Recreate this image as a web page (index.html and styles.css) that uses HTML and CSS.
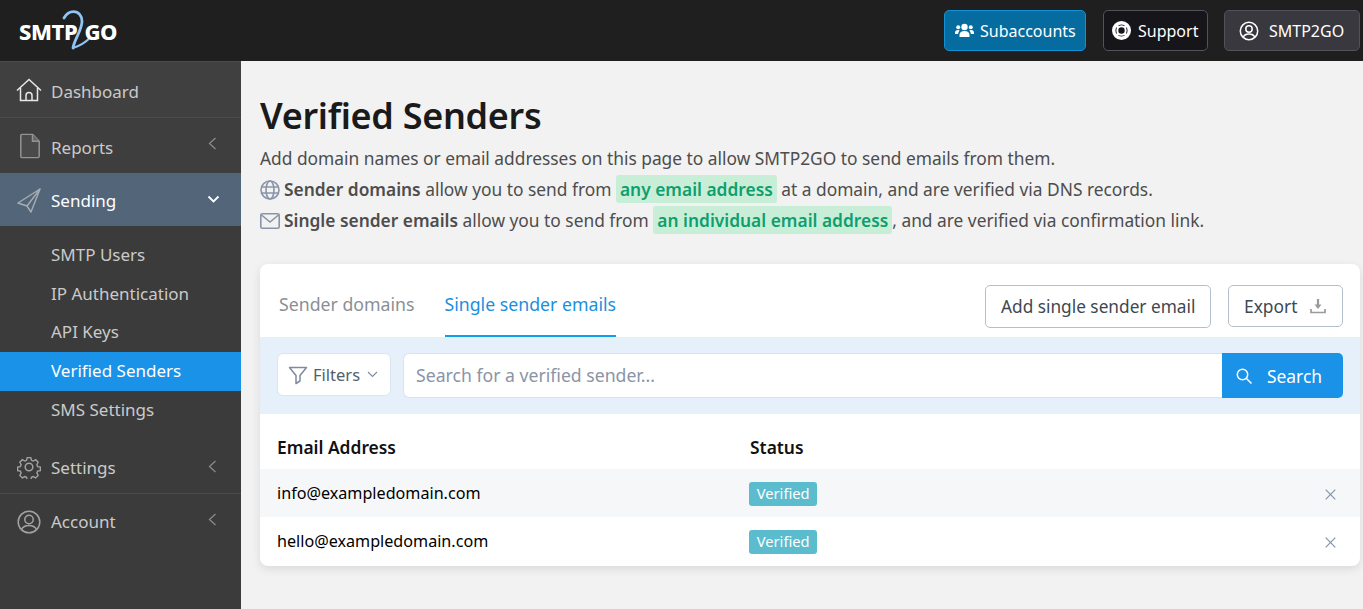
FILE: index.html
```html
<!DOCTYPE html>
<html lang="en">
<head>
<meta charset="utf-8">
<title>Verified Senders</title>
<link rel="stylesheet" href="styles.css">
</head>
<body>
<header class="topbar">
  <a class="logo"><span>SMTP</span><svg class="logo-two" viewBox="0 0 30 42" width="30" height="42"><path d="M2 8C4.500 3.500 8 1.700 11.500 1.700c5 0 8.500 4 8.500 9.500C20 20 12 30 11 38" fill="none" stroke="#8fc4f5" stroke-width="2.800" stroke-linecap="round"/><path d="M11 38c6-2 12-5 16.700-10" fill="none" stroke="#8fc4f5" stroke-width="2" stroke-linecap="round"/></svg><span>GO</span></a>
  <nav class="top-actions">
    <a class="top-btn top-btn-blue"><svg width="19" height="15" viewBox="0 0 19 15"><circle cx="9.500" cy="4" r="3.200" fill="#fff"/><circle cx="3.200" cy="4.200" r="2" fill="#fff"/><circle cx="15.800" cy="4.200" r="2" fill="#fff"/><path d="M4.500 14v-2c0-2.500 2-4 5-4s5 1.500 5 4v2z" fill="#fff"/><path d="M0 10c0-2 1-3 3-3 .7 0 1.300.2 1.700.5C3.800 8.300 3.300 9.300 3.200 11H0zM19 10c0-2-1-3-3-3-.7 0-1.300.2-1.700.5.900.8 1.400 1.800 1.500 3.500H19z" fill="#fff"/></svg>Subaccounts</a>
    <a class="top-btn top-btn-dark"><svg width="19" height="19" viewBox="0 0 19 19" fill="none" stroke="#fff"><circle cx="9.500" cy="9.500" r="7.800" stroke-width="3.400"/><circle cx="9.500" cy="9.500" r="4.200" stroke-width="2"/><path d="m3.800 3.800 2.800 2.800M15.200 3.800l-2.800 2.800M3.800 15.200l2.800-2.800M15.200 15.200l-2.800-2.800" stroke-width="2.600"/></svg>Support</a>
    <a class="top-btn top-btn-grey"><svg width="20" height="20" viewBox="0 0 20 20" fill="none" stroke="#fff" stroke-width="1.500"><circle cx="10" cy="10" r="8.700"/><circle cx="10" cy="8" r="3.200"/><path d="M4.300 16c1-2.300 3-3 5.700-3s4.700.7 5.700 3"/></svg>SMTP2GO</a>
  </nav>
</header>
<div class="shell">
  <aside class="sidebar">
    <a class="nav-item nav-dash"><svg class="nav-icon" viewBox="0 0 26 24" width="26" height="24" fill="none" stroke="#e8e8e8" stroke-width="1.500"><path d="M1 12.500 13 1.500l12 11"/><path d="M4.500 10v12.500h17V10"/><path d="M10 22.500v-5a3 3 0 0 1 6 0v5"/></svg><span>Dashboard</span></a>
    <a class="nav-item nav-reports"><svg class="nav-icon" viewBox="0 0 20 25" width="20" height="25" fill="#4a4a4a" stroke="#939393" stroke-width="1.500"><path d="M2 .8h10.500l6.700 7v15a1.400 1.400 0 0 1-1.400 1.400H2A1.400 1.400 0 0 1 .8 22.800V2A1.400 1.400 0 0 1 2 .8z"/><path d="M12.500 .8v7h6.700" fill="#666"/></svg><span>Reports</span><svg class="chev" width="9" height="13" viewBox="0 0 9 13" fill="none" stroke="#8a8a8a" stroke-width="1.300"><path d="M7.500 1 1.500 6.500l6 5.500"/></svg></a>
    <a class="nav-item nav-sending"><svg class="nav-icon" viewBox="0 0 26 26" width="26" height="26" fill="none" stroke="#a7adb5" stroke-width="1.400" stroke-linejoin="round"><path d="M24 2 2 16l9 3 4 6z"/><path d="M24 2 11 19"/></svg><span>Sending</span><svg class="chev-down" width="13" height="9" viewBox="0 0 13 9" fill="none" stroke="#fff" stroke-width="1.800"><path d="m1.500 1.500 5 5 5-5"/></svg></a>
    <div class="subnav">
      <a class="sub-item">SMTP Users</a>
      <a class="sub-item">IP Authentication</a>
      <a class="sub-item">API Keys</a>
      <a class="sub-item sub-active">Verified Senders</a>
      <a class="sub-item">SMS Settings</a>
    </div>
    <a class="nav-item nav-settings"><svg class="nav-icon" viewBox="0 0 24 24" width="24" height="24" fill="none" stroke="#a3a3a3" stroke-width="1.500"><circle cx="12" cy="12" r="3.800"/><path d="M10 1.500h4l.7 3 2 .9 2.700-1.500 2.800 2.800-1.500 2.600.9 2.200 3 .5v4l-3 .6-.9 2 1.500 2.700-2.800 2.800-2.700-1.500-2 .9-.7 3h-4l-.7-3-2-.9-2.700 1.500-2.800-2.800 1.500-2.700-.9-2-3-.6v-4l3-.5.900-2.200-1.500-2.600 2.800-2.800 2.700 1.500 2-.9z" transform="translate(1.200 1.200) scale(.9)"/></svg><span>Settings</span><svg class="chev" width="9" height="13" viewBox="0 0 9 13" fill="none" stroke="#8a8a8a" stroke-width="1.300"><path d="M7.500 1 1.500 6.500l6 5.500"/></svg></a>
    <a class="nav-item nav-account"><svg class="nav-icon" viewBox="0 0 24 24" width="24" height="24" fill="none" stroke="#a3a3a3" stroke-width="1.500"><circle cx="12" cy="12" r="10.800"/><circle cx="12" cy="9.500" r="4.200"/><path d="M4.500 19.500c1.500-3 4-4 7.500-4s6 1 7.500 4"/></svg><span>Account</span><svg class="chev" width="9" height="13" viewBox="0 0 9 13" fill="none" stroke="#8a8a8a" stroke-width="1.300"><path d="M7.500 1 1.500 6.500l6 5.500"/></svg></a>
  </aside>
  <main class="content">
    <h1 class="title">Verified Senders</h1>
    <p class="lead">Add domain names or email addresses on this page to allow SMTP2GO to send emails from them.</p>
    <p class="lead"><svg class="lead-icon" viewBox="0 0 20 20" width="20" height="20" fill="none" stroke="#8a94a8" stroke-width="1.600"><circle cx="10" cy="10" r="9"/><ellipse cx="10" cy="10" rx="4" ry="9"/><path d="M1.500 7h17M1.500 13h17"/></svg><b>Sender domains</b> allow you to send from <mark class="hl">any email address</mark> at a domain, and are verified via DNS records.</p>
    <p class="lead"><svg class="lead-icon lead-icon-mail" viewBox="0 0 20 16" width="20" height="16" fill="none" stroke="#8a94a8" stroke-width="1.600"><rect x=".8" y=".8" width="18.400" height="14.400" rx="1.500"/><path d="m1.500 2 8.500 7 8.500-7"/></svg><b>Single sender emails</b> allow you to send from <mark class="hl">an individual email address</mark>, and are verified via confirmation link.</p>
    <section class="card">
      <div class="card-head">
        <div class="tabs"><a class="tab">Sender domains</a><a class="tab tab-active">Single sender emails</a></div>
        <div class="head-actions">
          <a class="btn btn-add">Add single sender email</a>
          <a class="btn btn-export">Export<svg width="16" height="16" viewBox="0 0 16 16" fill="none"><path d="M8 1v8" stroke="#9a9a9a" stroke-width="2.200"/><path d="M4.500 6.500h7L8 11z" fill="#9a9a9a"/><path d="M1 11v3.500h14V11" stroke="#9a9a9a" stroke-width="1.700"/></svg></a>
        </div>
      </div>
      <div class="filterbar">
        <a class="filters"><svg width="20" height="20" viewBox="0 0 20 20" fill="none" stroke="#7f8a9c" stroke-width="1.500"><path d="M1.500 2.500h17l-6.500 8v5.500l-4 2.500v-8z" stroke-linejoin="round"/></svg>Filters<svg width="11" height="7" viewBox="0 0 11 7" fill="none" stroke="#7f8a9c" stroke-width="1.100"><path d="m1 1 4.500 4.500L10 1"/></svg></a>
        <div class="search">
          <span class="search-input">Search for a verified sender...</span>
          <a class="search-btn"><svg width="16" height="16" viewBox="0 0 16 16" fill="none" stroke="#fff" stroke-width="1.500"><circle cx="6.500" cy="6.500" r="5.200"/><path d="m10.500 10.500 5 5"/></svg>Search</a>
        </div>
      </div>
      <div class="table">
        <div class="row row-head"><span class="col-email">Email Address</span><span class="col-status">Status</span></div>
        <div class="row row-alt"><span class="col-email">info@exampledomain.com</span><span class="col-status"><span class="badge">Verified</span></span><svg class="remove" width="11" height="11" viewBox="0 0 11 11" fill="none" stroke="#8593a8" stroke-width="1.200"><path d="m.7.700 9.600 9.600M10.300.700.700 10.300"/></svg></div>
        <div class="row"><span class="col-email">hello@exampledomain.com</span><span class="col-status"><span class="badge">Verified</span></span><svg class="remove" width="11" height="11" viewBox="0 0 11 11" fill="none" stroke="#8593a8" stroke-width="1.200"><path d="m.7.700 9.600 9.600M10.300.700.700 10.300"/></svg></div>
      </div>
    </section>
  </main>
</div>
</body>
</html>
```
FILE: styles.css
```css
* { box-sizing: border-box; }
html, body { margin: 0; height: 100%; overflow: hidden; }
body { font-family: "Noto Sans", sans-serif; background: #f2f2f2; color: #4d4d4d; }
a { text-decoration: none; color: inherit; }
.topbar { height: 61px; background: #1f1f1f; display: flex; align-items: center; justify-content: space-between; padding: 0 3px 0 19px; }
.logo { display: flex; align-items: center; color: #fff; font-weight: 800; font-size: 22px; letter-spacing: -.4px; height: 61px; }
.logo-two { margin: 0 -8px 0 -15px; }
.top-actions { display: flex; gap: 16px; }
.top-btn { display: flex; align-items: center; height: 41px; border-radius: 5px; color: #fff; font-size: 16px; border: 1px solid; }
.top-btn-blue { width: 142px; gap: 6px; padding-left: 10px; background: #066c9f; border-color: #1291d5; margin-right: 1px; }
.top-btn-dark { width: 105px; gap: 7px; padding-left: 8px; background: #15151a; border-color: #50545a; }
.top-btn-grey { width: 136px; gap: 10px; padding-left: 14px; background: #38383e; border-color: #50545a; }
.shell { display: flex; height: 548px; }
.sidebar { width: 241px; flex: none; background: #3b3b3b; display: flex; flex-direction: column; color: #cacaca; font-size: 17px; }
.nav-item { display: flex; align-items: center; position: relative; padding-left: 51px; }
.nav-icon { position: absolute; left: 17px; top: 50%; transform: translateY(-50%); }
.chev { position: absolute; left: 208px; top: 19px; }
.chev-down { position: absolute; left: 207px; top: 22px; }
.nav-dash { height: 57px; padding-top: 4px; background: #404040; border-top: 1px solid #4b4b4b; border-bottom: 1px solid #4b4b4b; }
.nav-dash .nav-icon { left: 16px; }
.nav-reports { height: 55px; padding-top: 4px; background: #3e3e3e; }
.nav-reports .nav-icon { left: 20px; }
.nav-sending { height: 53px; padding-top: 2px; background: #536578; color: #fff; }
.nav-sending .nav-icon { left: 16px; }
.subnav { padding: 10px 0 0; display: flex; flex-direction: column; height: 215px; }
.sub-item { height: 38.700px; display: flex; align-items: center; padding: 0 0 2px 51px; }
.sub-active { background: #1a92e8; color: #fff; }
.nav-settings { height: 53px; border-bottom: 1px solid #4b4b4b; }
.nav-account { height: 55px; }
.content { flex: 1; padding: 30px 3px 0 19px; min-width: 0; }
.title { margin: 0 0 3px; font-size: 36px; line-height: 49px; font-weight: 600; color: #1a1a1a; letter-spacing: -.3px; }
.lead { margin: 0; font-size: 17.350px; height: 31px; line-height: 31px; white-space: nowrap; }
.lead b { font-weight: 600; }
.lead-icon { margin-right: 4px; vertical-align: -4px; }
.lead-icon-mail { vertical-align: -2px; }
.hl { display: inline-block; height: 28px; background: #c9eed7; color: #0e9f6e; font-weight: 600; padding: 0 4px; border-radius: 3px; line-height: 28px; }
.card { margin-top: 28px; background: #fff; border-radius: 8px; box-shadow: 0 3px 10px rgba(0,0,0,.1); height: 302px; overflow: hidden; }
.card-head { height: 73px; display: flex; justify-content: space-between; padding: 0 17px 0 19px; }
.tabs { display: flex; gap: 30px; }
.tab { height: 73px; line-height: 80px; font-size: 17.720px; color: #8b8f94; }
.tab-active { color: #1a8fde; border-bottom: 2px solid #0ea0ea; }
.head-actions { display: flex; gap: 17px; padding-top: 21px; }
.btn { height: 43px; padding-bottom: 1px; display: flex; align-items: center; border: 1px solid #b4bfcd; border-radius: 5px; font-size: 17.350px; color: #3d4852; }
.btn-add { width: 226px; font-size: 17.250px; padding-left: 15px; }
.btn-export { height: 42px; width: 115px; padding-left: 15px; gap: 13px; }
.filterbar { height: 77px; background: #e6f0fa; display: flex; align-items: flex-start; padding: 16px 17px 0; gap: 12px; }
.filters { width: 114px; height: 43px; background: #fff; border: 1px solid #dce4ee; border-radius: 6px; display: flex; align-items: center; padding-left: 10px; gap: 5px; font-size: 16.500px; color: #52606d; }
.filters svg:last-child { margin-left: 2px; }
.search { flex: 1; display: flex; height: 45px; }
.search-input { flex: 1; background: #fff; border: 1px solid #d9e3ee; border-right: 0; border-radius: 6px 0 0 6px; padding-left: 12px; line-height: 43px; color: #8a94a6; font-size: 17.650px; }
.search-btn { width: 121px; background: #1a92e8; color: #fff; border-radius: 0 5px 5px 0; display: flex; align-items: center; padding-left: 14px; gap: 15px; font-size: 17.400px; }
.row { height: 48px; display: flex; align-items: center; padding: 0 17px; position: relative; color: #000; font-size: 16.150px; }
.row-head { height: 55px; padding-top: 11px; font-weight: 600; font-size: 17.400px; color: #111; }
.row-alt { background: #f6f7f9; }
.col-email { width: 473px; }
.col-status { margin-top: 2px; }
.row-head .col-status { margin-top: 0; }
.badge { display: inline-block; margin-left: -1px; background: #5bbccd; color: #fff; font-size: 14.700px; line-height: 22px; height: 24px; padding: 0 7.750px; border-radius: 3px; }
.remove { position: absolute; right: 24px; top: 20px; }
```
